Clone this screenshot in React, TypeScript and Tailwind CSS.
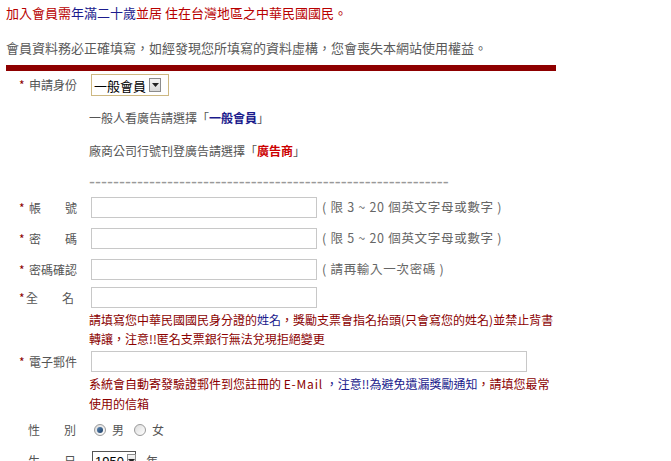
import React from 'react';

const Star: React.FC<{ w?: string }> = ({ w = 'w-[10px]' }) => (
  <span className={`inline-block ${w} text-[#8b0000]`}>*</span>
);

const Label: React.FC<{ star?: boolean; starW?: string; children: React.ReactNode }> = ({ star = true, starW, children }) => (
  <div className="w-[83px] shrink-0 pl-[13px] text-[12px] text-[#555] whitespace-pre">
    {star ? <Star w={starW} /> : <span className="inline-block w-[9px]" />}
    {children}
  </div>
);

const TextBox: React.FC<{ w?: string }> = ({ w = 'w-[226px]' }) => (
  <div className={`${w} h-[21px] border border-[#c8c8c8] bg-white`} />
);

const Arrow: React.FC = () => (
  <div className="flex h-[14px] w-[12px] items-center justify-center border border-[#8c8c8c] bg-gradient-to-b from-[#f4f4f4] to-[#d8d8d8]">
    <svg width="7" height="4" viewBox="0 0 7 4">
      <path d="M0 0h7L3.5 4z" fill="#222" />
    </svg>
  </div>
);

const Radio: React.FC<{ checked?: boolean }> = ({ checked }) => (
  <span className="inline-flex h-[12px] w-[12px] items-center justify-center rounded-full border border-[#9a9a9a] bg-gradient-to-br from-[#dcdcdc] to-[#ffffff]">
    {checked && <span className="h-[6px] w-[6px] rounded-full bg-gradient-to-br from-[#5b86b3] to-[#1d3f66]" />}
  </span>
);

const Hint: React.FC<{ children: React.ReactNode }> = ({ children }) => (
  <span className="ml-[5px] text-[12.5px] tracking-[0.7px] text-[#666] whitespace-pre">{children}</span>
);

export default function App() {
  return (
    <div className="min-h-screen bg-white pl-[6px] pt-[4px] font-['Noto_Sans_CJK_TC','Noto_Sans_CJK_SC',sans-serif] text-[#555]">
      <p className="text-[13px] leading-[18px] text-[#b80000]">
        加入會員需<span className="text-[#1c1c8e]">年滿二十歲</span>並居 住在台灣地區之中華民國國民。
      </p>
      <p className="mt-[17px] text-[13px] leading-[18px] text-[#5a5a5a]">
        會員資料務必正確填寫，如經發現您所填寫的資料虛構，您會喪失本網站使用權益。
      </p>
      <div className="mt-[8px] h-[6px] w-[550px] bg-[#8e0000]" />

      <div className="flex h-[28px] items-center">
        <Label>申請身份</Label>
        <div className="ml-[2px] flex h-[22px] w-[78px] items-center gap-[3px] border border-[#cdb882] bg-white pl-[2px]">
          <span className="text-[13px] leading-none text-black">一般會員</span>
          <Arrow />
        </div>
      </div>

      <div className="ml-[83px] mt-[9px] text-[12px] leading-[20px] text-[#555]">
        一般人看廣告請選擇「<span className="font-bold text-[#1a1a8c]">一般會員</span>」
      </div>
      <div className="ml-[83px] mt-[13px] text-[12px] leading-[20px] text-[#555]">
        廠商公司行號刊登廣告請選擇「<span className="font-bold text-[#cc0000]">廣告商</span>」
      </div>
      <div className="ml-[83px] mt-[11px] h-[20px] overflow-hidden font-['Liberation_Sans',sans-serif] text-[18px] leading-[20px] text-[#999]">
        {'-'.repeat(60)}
      </div>

      <div className="mt-[5px] flex items-center">
        <Label>{'帳　　號'}</Label>
        <div className="ml-[2px]"><TextBox /></div>
        <Hint>( 限 3 ~ 20 個英文字母或數字 )</Hint>
      </div>
      <div className="mt-[10px] flex items-center">
        <Label>{'密　　碼'}</Label>
        <div className="ml-[2px]"><TextBox /></div>
        <Hint>( 限 5 ~ 20 個英文字母或數字 )</Hint>
      </div>
      <div className="mt-[10px] flex items-center">
        <Label>密碼確認</Label>
        <div className="ml-[2px]"><TextBox /></div>
        <Hint>( 請再輸入一次密碼 )</Hint>
      </div>
      <div className="mt-[7px] flex items-center">
        <Label starW="w-[7px]">{'全　　名'}</Label>
        <div className="ml-[2px]"><TextBox /></div>
      </div>
      <div className="ml-[83px] mt-[2px] w-[470px] text-[12px] leading-[19px] text-[#8b0000]">
        請填寫您中華民國國民身分證的<span className="text-[#1a1a8c]">姓名</span>，獎勵支票會指名抬頭(只會寫您的姓名)並禁止背書轉讓，注意!!匿名支票銀行無法兌現拒絕變更
      </div>

      <div className="mt-[3px] flex items-center">
        <Label>電子郵件</Label>
        <div className="ml-[2px]"><TextBox w="w-[436px]" /></div>
      </div>
      <div className="ml-[83px] mt-[2px] w-[464px] text-[12px] leading-[20px] text-[#8b0000]">
        系統會自動寄發驗證郵件到您註冊的 <span className="tracking-[0.8px]">E-Mail</span> <span className="text-[#1a1a8c]">，注意!!為避免遺漏獎勵通知</span>，請填您最常使用的信箱
      </div>

      <div className="mt-[6px] flex h-[20px] items-center">
        <Label star={false}>{'性　　別'}</Label>
        <div className="ml-[5px] flex items-center text-[12px] text-[#555]">
          <Radio checked />
          <span className="ml-[6px]">男</span>
          <span className="ml-[10px] flex"><Radio /></span>
          <span className="ml-[6px]">女</span>
        </div>
      </div>

      <div className="mt-[11px] flex h-[20px] items-center">
        <Label star={false}>{'生　　日'}</Label>
        <div className="ml-[3px] flex h-[20px] w-[44px] items-center gap-[3px] border border-[#555] bg-white pl-[2px]">
          <span className="font-['Liberation_Sans',sans-serif] text-[13px] leading-none text-black">1950</span>
          <Arrow />
        </div>
        <span className="ml-[10px] text-[12px] text-[#555]">年</span>
      </div>
    </div>
  );
}
